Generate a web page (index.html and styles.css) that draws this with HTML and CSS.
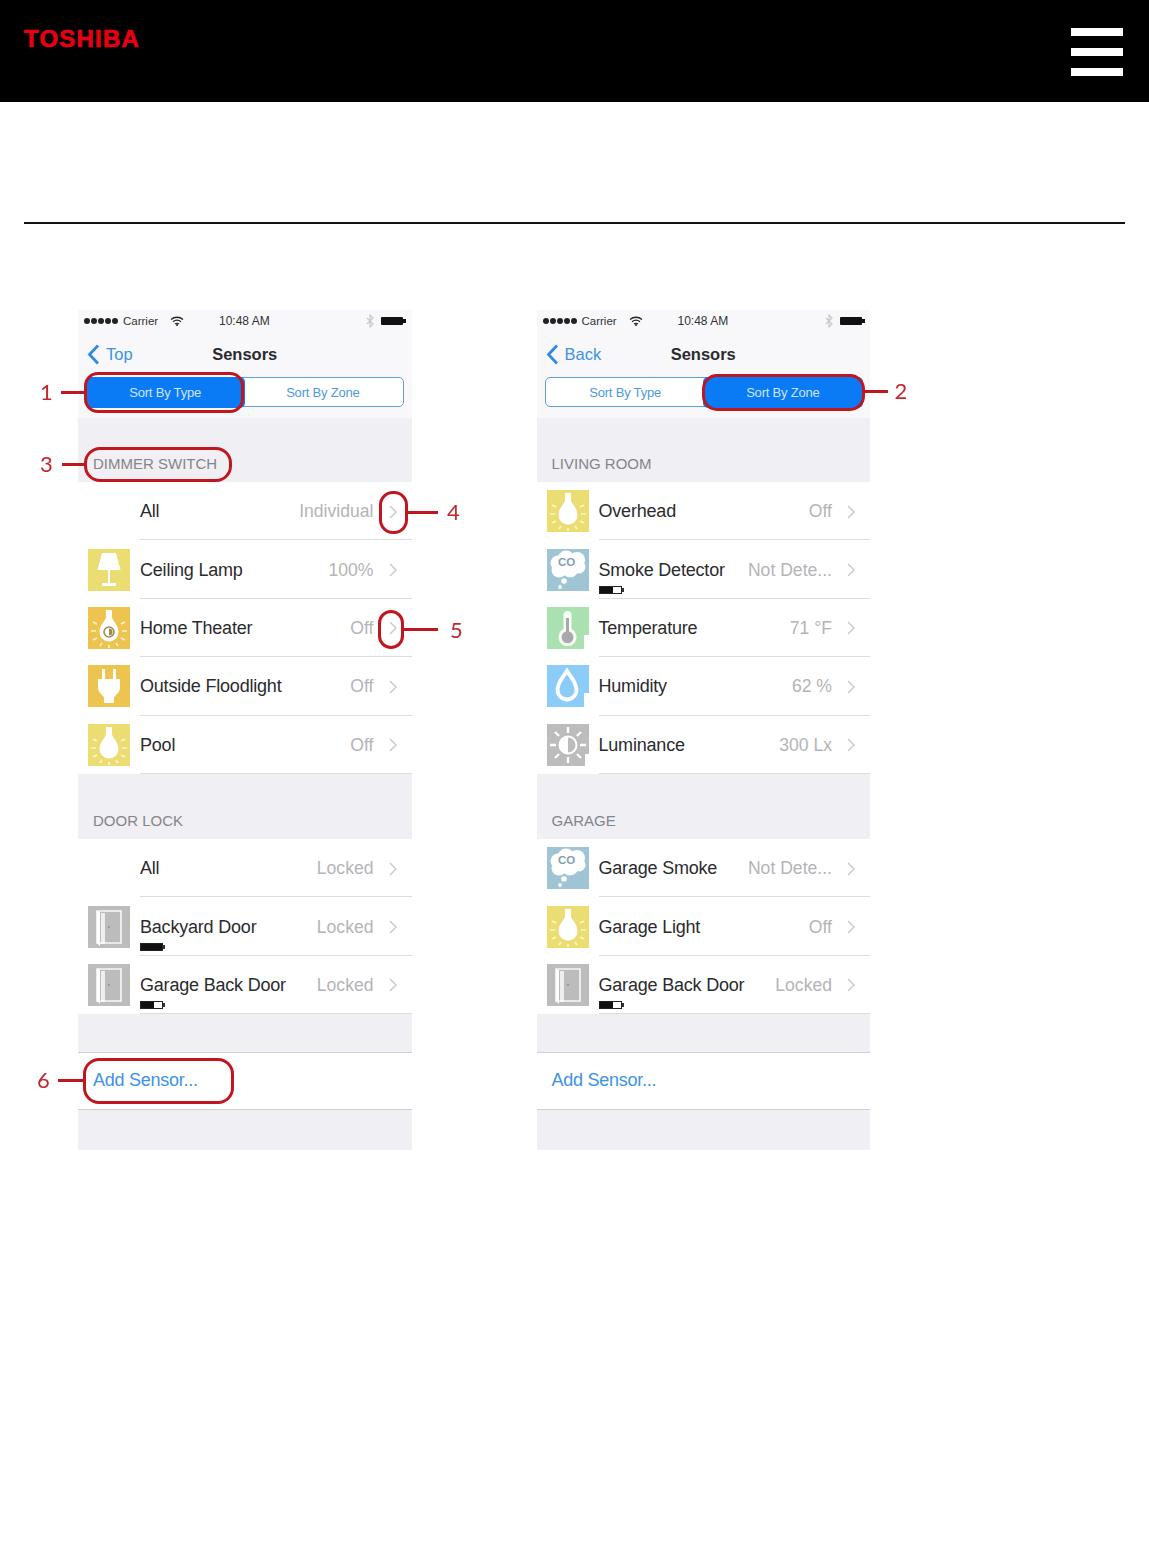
FILE: index.html
```html
<!DOCTYPE html>
<html lang="en">
<head>
    <meta charset="UTF-8">
    <meta name="viewport" content="width=device-width, initial-scale=1.0">
    <title>Toshiba · Sensors</title>
    <link rel="stylesheet" href="styles.css">
</head>
<body>
    <svg class="defs" width="0" height="0">
        <symbol id="i-bulb" viewBox="0 0 42 42">
            <path d="M18 3h6v7c0 3 6.500 8 6.500 15a9.500 9.500 0 0 1-19 0c0-7 6.500-12 6.500-15z" fill="#fff"/>
            <path d="M3 24h5M34 24h5M5 15l4 2M37 15l-4 2M5 33l4-2M37 33l-4-2M12 39l2-3M30 39l-2-3M21 41v-3" stroke="#fff" stroke-opacity=".7" stroke-width="1.700" fill="none"/>
        </symbol>
        <symbol id="i-theater" viewBox="0 0 42 42">
            <path d="M18 3h6v7c0 3 6.500 8 6.500 15a9.500 9.500 0 0 1-19 0c0-7 6.500-12 6.500-15z" fill="#fff"/>
            <circle cx="21" cy="25" r="5" fill="none" stroke="#a08a50" stroke-width="1.600"/>
            <path d="M21 21.500a3.500 3.500 0 0 1 0 7z" fill="#a08a50"/>
            <path d="M3 24h5M34 24h5M5 15l4 2M37 15l-4 2M5 33l4-2M37 33l-4-2M12 39l2-3M30 39l-2-3M21 41v-3" stroke="#fff" stroke-opacity=".75" stroke-width="1.700" fill="none"/>
        </symbol>
        <symbol id="i-lamp" viewBox="0 0 42 42">
            <path d="M14 4h14l4.500 17h-23z" fill="#fff"/>
            <path d="M21 21v13" stroke="#fff" stroke-width="2" fill="none"/>
            <path d="M14 34h14v3H14z" fill="#fff"/>
        </symbol>
        <symbol id="i-plug" viewBox="0 0 42 42">
            <path d="M14 4h3v11h-3zM25 4h3v11h-3z" fill="#fff"/>
            <path d="M10 14h22v9c0 3-2 5-4 7-1 1-2 2-2 3v5H16v-5c0-1-1-2-2-3-2-2-4-4-4-7z" fill="#fff"/>
        </symbol>
        <symbol id="i-door" viewBox="0 0 42 42">
            <path d="M9 5h24v32H9z" fill="none" stroke="#fff" stroke-opacity=".9" stroke-width="1.600"/>
            <path d="M9 5l3 1v34l-3-3z" fill="#fff"/>
            <path d="M13 7h4v31h-4z" fill="#fff" fill-opacity=".75"/>
            <circle cx="21" cy="21" r="1" fill="#8e8e8e"/>
        </symbol>
        <symbol id="i-smoke" viewBox="0 0 42 42">
            <g fill="#fff">
                <circle cx="11" cy="14" r="7.500"/>
                <circle cx="19" cy="10" r="8.500"/>
                <circle cx="30" cy="11" r="8"/>
                <circle cx="32" cy="18" r="6.500"/>
                <circle cx="23" cy="20" r="8.500"/>
                <circle cx="12" cy="21" r="7.500"/>
                <circle cx="17" cy="32" r="2.800"/>
                <circle cx="13" cy="38" r="1.900"/>
            </g>
        </symbol>
        <symbol id="i-temp" viewBox="0 0 42 42">
            <path d="M16.500 8a4 4 0 0 1 8 0v14a9 9 0 1 1-8 0z" fill="#fff" fill-opacity=".9"/>
            <path d="M19 11h3v13.500a6 6 0 1 1-3 0z" fill="#a9a9a9"/>
            <path d="M37 28h5v14h-5z" fill="#fff"/>
        </symbol>
        <symbol id="i-drop" viewBox="0 0 42 42">
            <path d="M20 6c3 5 9.500 11 9.500 19a9.500 9.500 0 0 1-19 0c0-8 6.500-14 9.500-19z" fill="none" stroke="#fff" stroke-width="3.800"/>
            <path d="M37 28h5v14h-5z" fill="#fff"/>
        </symbol>
        <symbol id="i-sun" viewBox="0 0 42 42">
            <circle cx="21" cy="21" r="8.500" fill="none" stroke="#fff" stroke-width="2"/>
            <path d="M21 12.500a8.500 8.500 0 0 0 0 17z" fill="#fff"/>
            <path d="M21 3v6M21 33v6M3 21h6M33 21h6M8 8l4 4M34 8l-4 4M8 34l4-4M34 34l-4-4" stroke="#fff" stroke-width="2.400" fill="none"/>
            <path d="M38 30h4v12h-4z" fill="#fff"/>
        </symbol>
        <symbol id="i-chev" viewBox="0 0 8 14">
            <path d="M1 1l6 6-6 6" fill="none" stroke="#c7c7cc" stroke-width="1.400"/>
        </symbol>
        <symbol id="i-back" viewBox="0 0 13 21">
            <path d="M11 1.500L2.500 10.500l8.500 9" fill="none" stroke="#2f8be6" stroke-width="2.800"/>
        </symbol>
        <symbol id="i-wifi" viewBox="0 0 14 10">
            <path d="M1 3.500c3.500-3 8.500-3 12 0M3 5.800c2.500-2 5.500-2 8 0M5 8c1-.9 3-.9 4 0" fill="none" stroke="#222" stroke-width="1.300"/>
            <circle cx="7" cy="9" r="1" fill="#222"/>
        </symbol>
        <symbol id="i-bt" viewBox="0 0 8 14">
            <path d="M1 4l6 6-3 3V1l3 3-6 6" fill="none" stroke="#c9c9cd" stroke-width="1.200"/>
        </symbol>
    </svg>

    <header class="topbar">
        <a href="#" class="logo">TOSHIBA</a>
        <div class="burger"><span></span><span></span><span></span></div>
    </header>

    <div class="container">
        <hr class="rule">

        <div class="figure">
            <!-- sort by type -->
            <div class="phone">
                <div class="phone-top">
                    <div class="status">
                        <div class="dots"><i></i><i></i><i></i><i></i><i></i></div>
                        <span class="carrier">Carrier</span>
                        <svg class="wifi"><use href="#i-wifi"/></svg>
                        <span class="clock">10:48 AM</span>
                        <svg class="bt"><use href="#i-bt"/></svg>
                        <div class="battery"></div>
                    </div>
                    <div class="navbar">
                        <a href="#" class="back"><svg class="back-arrow"><use href="#i-back"/></svg>Top</a>
                        <span class="nav-title">Sensors</span>
                    </div>
                    <div class="segments">
                        <div class="segment active">Sort By Type</div>
                        <div class="segment">Sort By Zone</div>
                    </div>
                </div>

                <div class="group-head first">DIMMER SWITCH</div>
                <div class="row"><div class="icon"></div><div class="row-body"><span class="name">All</span><span class="value">Individual</span><svg class="chev"><use href="#i-chev"/></svg></div></div>
                <div class="row"><svg class="icon yellow"><use href="#i-lamp"/></svg><div class="row-body"><span class="name">Ceiling Lamp</span><span class="value">100%</span><svg class="chev"><use href="#i-chev"/></svg></div></div>
                <div class="row"><svg class="icon orange"><use href="#i-theater"/></svg><div class="row-body"><span class="name">Home Theater</span><span class="value">Off</span><svg class="chev"><use href="#i-chev"/></svg></div></div>
                <div class="row"><svg class="icon orange"><use href="#i-plug"/></svg><div class="row-body"><span class="name">Outside Floodlight</span><span class="value">Off</span><svg class="chev"><use href="#i-chev"/></svg></div></div>
                <div class="row"><svg class="icon yellow"><use href="#i-bulb"/></svg><div class="row-body"><span class="name">Pool</span><span class="value">Off</span><svg class="chev"><use href="#i-chev"/></svg></div></div>

                <div class="group-head">DOOR LOCK</div>
                <div class="row"><div class="icon"></div><div class="row-body"><span class="name">All</span><span class="value">Locked</span><svg class="chev"><use href="#i-chev"/></svg></div></div>
                <div class="row"><svg class="icon grey"><use href="#i-door"/></svg><div class="row-body"><span class="name">Backyard Door</span><span class="value">Locked</span><svg class="chev"><use href="#i-chev"/></svg><div class="cell full"></div></div></div>
                <div class="row"><svg class="icon grey"><use href="#i-door"/></svg><div class="row-body"><span class="name">Garage Back Door</span><span class="value">Locked</span><svg class="chev"><use href="#i-chev"/></svg><div class="cell"></div></div></div>

                <div class="spacer"></div>
                <div class="add-row"><a href="#">Add Sensor...</a></div>
                <div class="phone-end"></div>

                <!-- red callouts -->
                <div class="mark mark-1"></div><div class="lead lead-1"></div><span class="num num-1">1</span>
                <div class="mark mark-3"></div><div class="lead lead-3"></div><span class="num num-3">3</span>
                <div class="mark mark-4"></div><div class="lead lead-4"></div><span class="num num-4">4</span>
                <div class="mark mark-5"></div><div class="lead lead-5"></div><span class="num num-5">5</span>
                <div class="mark mark-6"></div><div class="lead lead-6"></div><span class="num num-6">6</span>
            </div>

            <!-- sort by zone -->
            <div class="phone">
                <div class="phone-top">
                    <div class="status">
                        <div class="dots"><i></i><i></i><i></i><i></i><i></i></div>
                        <span class="carrier">Carrier</span>
                        <svg class="wifi"><use href="#i-wifi"/></svg>
                        <span class="clock">10:48 AM</span>
                        <svg class="bt"><use href="#i-bt"/></svg>
                        <div class="battery"></div>
                    </div>
                    <div class="navbar">
                        <a href="#" class="back"><svg class="back-arrow"><use href="#i-back"/></svg>Back</a>
                        <span class="nav-title">Sensors</span>
                    </div>
                    <div class="segments">
                        <div class="segment">Sort By Type</div>
                        <div class="segment active">Sort By Zone</div>
                    </div>
                </div>

                <div class="group-head first">LIVING ROOM</div>
                <div class="row"><svg class="icon yellow"><use href="#i-bulb"/></svg><div class="row-body"><span class="name">Overhead</span><span class="value">Off</span><svg class="chev"><use href="#i-chev"/></svg></div></div>
                <div class="row"><svg class="icon smoke" viewBox="0 0 42 42"><use href="#i-smoke"/><text x="19.500" y="17" class="icon-co">CO</text></svg><div class="row-body"><span class="name">Smoke Detector</span><span class="value">Not Dete...</span><svg class="chev"><use href="#i-chev"/></svg><div class="cell"></div></div></div>
                <div class="row"><svg class="icon green"><use href="#i-temp"/></svg><div class="row-body"><span class="name">Temperature</span><span class="value">71 °F</span><svg class="chev"><use href="#i-chev"/></svg></div></div>
                <div class="row"><svg class="icon blue"><use href="#i-drop"/></svg><div class="row-body"><span class="name">Humidity</span><span class="value">62 %</span><svg class="chev"><use href="#i-chev"/></svg></div></div>
                <div class="row"><svg class="icon grey"><use href="#i-sun"/></svg><div class="row-body"><span class="name">Luminance</span><span class="value">300 Lx</span><svg class="chev"><use href="#i-chev"/></svg></div></div>

                <div class="group-head">GARAGE</div>
                <div class="row"><svg class="icon smoke" viewBox="0 0 42 42"><use href="#i-smoke"/><text x="19.500" y="17" class="icon-co">CO</text></svg><div class="row-body"><span class="name">Garage Smoke</span><span class="value">Not Dete...</span><svg class="chev"><use href="#i-chev"/></svg></div></div>
                <div class="row"><svg class="icon yellow"><use href="#i-bulb"/></svg><div class="row-body"><span class="name">Garage Light</span><span class="value">Off</span><svg class="chev"><use href="#i-chev"/></svg></div></div>
                <div class="row"><svg class="icon grey"><use href="#i-door"/></svg><div class="row-body"><span class="name">Garage Back Door</span><span class="value">Locked</span><svg class="chev"><use href="#i-chev"/></svg><div class="cell"></div></div></div>

                <div class="spacer"></div>
                <div class="add-row"><a href="#">Add Sensor...</a></div>
                <div class="phone-end"></div>

                <div class="mark mark-2"></div><div class="lead lead-2"></div><span class="num num-2">2</span>
            </div>
        </div>
    </div>
</body>
</html>
```

FILE: styles.css
```css
* {
    margin: 0;
    padding: 0;
    box-sizing: border-box;
}

body {
    font-family: 'Liberation Sans', Arial, sans-serif;
    background: #fff;
    color: #2b2b2f;
    height: 1560px;
    overflow: hidden;
}

a {
    text-decoration: none;
}

.defs {
    position: absolute;
}

/* top bar */
.topbar {
    height: 102px;
    background: #000;
    padding: 0 26px 0 24px;
    display: flex;
    justify-content: space-between;
    align-items: flex-start;
}

.logo {
    margin-top: 25px;
    font-size: 24px;
    line-height: 28px;
    font-weight: 700;
    letter-spacing: 1.2px;
    color: #e60012;
    -webkit-text-stroke: 0.7px #e60012;
}

.burger {
    margin-top: 28px;
    width: 52px;
    display: flex;
    flex-direction: column;
    gap: 12px;
}

.burger span {
    height: 8px;
    background: #fff;
}

.container {
    padding: 0 24px;
}

.rule {
    margin-top: 120px;
    border: 0;
    border-top: 2px solid #111;
}

/* the two phone shots */
.figure {
    margin-top: 86px;
    padding-left: 54px;
    display: flex;
    gap: 125px;
}

.phone {
    width: 333.500px;
    position: relative;
    filter: blur(0.6px);
}

.phone-top {
    height: 108px;
    background: #f8f8fa;
}

.status {
    height: 22px;
    padding-left: 6px;
    display: flex;
    align-items: center;
    font-size: 11.500px;
    color: #333;
}

.dots {
    display: flex;
    gap: 1px;
}

.dots i {
    width: 6px;
    height: 6px;
    border-radius: 50%;
    background: #222;
}

.carrier {
    margin-left: 5px;
    width: 37px;
}

.wifi {
    margin-left: 10px;
    width: 14px;
    height: 10px;
}

.clock {
    margin-left: 35px;
    width: 60px;
    font-size: 12px;
}

.bt {
    margin-left: 87px;
    width: 8px;
    height: 14px;
}

.battery {
    margin-left: 7px;
    width: 22px;
    height: 8px;
    border-radius: 1px;
    background: #111;
    position: relative;
}

.battery::after {
    content: "";
    position: absolute;
    right: -3px;
    top: 2px;
    width: 3px;
    height: 4px;
    background: #111;
}

.navbar {
    height: 44px;
    position: relative;
    display: flex;
    align-items: center;
    justify-content: center;
}

.back {
    position: absolute;
    left: 9px;
    top: 12px;
    display: flex;
    align-items: center;
    gap: 6px;
    font-size: 16.500px;
    color: #3e92e4;
}

.back-arrow {
    width: 13px;
    height: 21px;
}

.nav-title {
    font-size: 16.500px;
    font-weight: 700;
    color: #2b2b2f;
}

.segments {
    margin: 1px 8px 0;
    height: 30px;
    display: flex;
    background: #fff;
    border: 1.500px solid #5da2dc;
    border-radius: 5px;
}

.segment {
    flex: 1;
    display: flex;
    align-items: center;
    justify-content: center;
    font-size: 13px;
    letter-spacing: -0.2px;
    color: #4d9ae0;
}

.segment.active {
    margin: -1.500px;
    background: #0a7bf4;
    color: #cfe4fb;
    border-radius: 5px;
}

/* list */
.group-head {
    height: 65px;
    padding: 0 0 9px 15px;
    display: flex;
    align-items: flex-end;
    background: #efeff4;
    font-size: 15px;
    line-height: 18px;
    color: #85858b;
}

.group-head.first {
    height: 64px;
}

.row {
    height: 58.400px;
    padding-left: 10px;
    background: #fff;
    display: flex;
    align-items: center;
}

.icon {
    width: 42px;
    height: 42px;
    flex-shrink: 0;
}

.yellow { background: #ecdd72; }
.orange { background: #ecc44f; }
.grey { background: #bcbcbc; }
.smoke { background: #9fc4d4; }
.green { background: #a9e2b0; }
.blue { background: #8bcdf8; }

.icon-co {
    font-family: 'Liberation Sans', sans-serif;
    font-size: 11.500px;
    font-weight: 700;
    fill: #84a0ae;
    text-anchor: middle;
}

.row-body {
    flex: 1;
    align-self: stretch;
    margin-left: 10px;
    padding: 2px 15px 0 0;
    display: flex;
    align-items: center;
    border-bottom: 1.500px solid #ddddde;
    position: relative;
}

.name {
    font-size: 18px;
    letter-spacing: -0.2px;
    color: #2b2b2f;
}

.value {
    margin-left: auto;
    font-size: 17.600px;
    color: #b4b4b8;
    white-space: nowrap;
}

.chev {
    margin-left: 15px;
    width: 8px;
    height: 14px;
    flex-shrink: 0;
}

/* little battery under a row name */
.cell {
    position: absolute;
    left: 0;
    bottom: 4px;
    width: 23px;
    height: 8px;
    border: 1px solid #222;
    background: linear-gradient(90deg, #111 62%, #fff 62%);
}

.cell.full {
    background: #111;
}

.cell::after {
    content: "";
    position: absolute;
    right: -3px;
    top: 1px;
    width: 2px;
    height: 4px;
    background: #333;
}

.spacer {
    height: 37.800px;
    background: #efeff4;
}

.add-row {
    height: 58px;
    padding-left: 15px;
    background: #fff;
    display: flex;
    align-items: center;
    border-top: 1.500px solid #d0d0d4;
    border-bottom: 1.500px solid #d0d0d4;
    font-size: 18px;
    letter-spacing: -0.25px;
}

.add-row a {
    color: #3e92e4;
}

.phone-end {
    height: 40px;
    background: #efeff4;
}

/* callouts */
.mark {
    position: absolute;
    border: 3px solid #c1161f;
}

.lead {
    position: absolute;
    height: 3px;
    background: #c1161f;
}

.num {
    position: absolute;
    font-family: Lato, sans-serif;
    font-size: 22px;
    line-height: 26px;
    color: #c1272d;
}

.mark-1 { left: 6px; top: 62px; width: 160px; height: 41px; border-radius: 14px; }
.lead-1 { left: -17px; top: 81px; width: 23px; }
.num-1 { left: -38px; top: 69px; }

.mark-2 { left: 165px; top: 64px; width: 163px; height: 37px; border-radius: 15px; }
.lead-2 { left: 327px; top: 80px; width: 24px; }
.num-2 { left: 358px; top: 68px; }

.mark-3 { left: 6px; top: 137px; width: 148px; height: 35px; border-radius: 16px; }
.lead-3 { left: -16px; top: 153px; width: 22px; }
.num-3 { left: -38px; top: 141px; }

.mark-4 { left: 301px; top: 181px; width: 29px; height: 43px; border-radius: 14px; }
.lead-4 { left: 329px; top: 201px; width: 31px; }
.num-4 { left: 369px; top: 189px; }

.mark-5 { left: 300px; top: 300px; width: 26px; height: 39px; border-radius: 13px; }
.lead-5 { left: 325px; top: 318px; width: 35px; }
.num-5 { left: 372px; top: 307px; }

.mark-6 { left: 5px; top: 748px; width: 151px; height: 46px; border-radius: 16px; }
.lead-6 { left: -20px; top: 769px; width: 25px; }
.num-6 { left: -41px; top: 757px; }
```
